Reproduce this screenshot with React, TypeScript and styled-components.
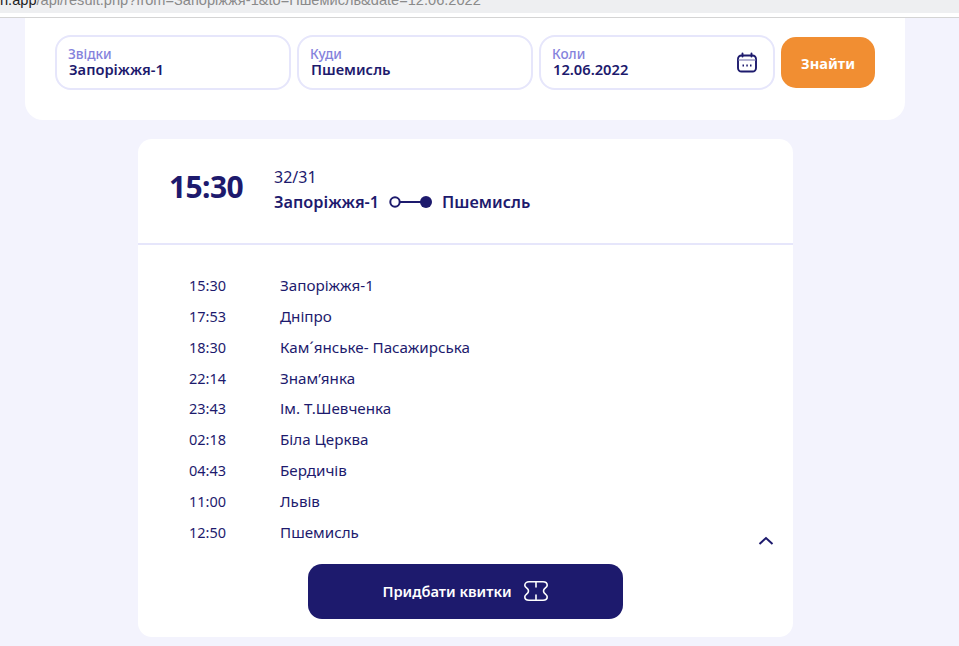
import React from 'react'
import styled, { createGlobalStyle } from 'styled-components'

const navy = '#1d1a6d'

const GlobalStyle = createGlobalStyle`
  html, body {
    margin: 0;
    height: 100%;
    overflow: hidden;
    background: #f3f3fd;
    font-family: "Noto Sans", "Open Sans", sans-serif;
  }
`

const Page = styled.div`
  width: 959px;
  height: 646px;
  overflow: hidden;
`

const AddressBar = styled.div`
  height: 13px;
  background: #eeeff1;
  color: #8a8a8a;
  font: 14.6px/14px "Liberation Sans", sans-serif;
  white-space: nowrap;
  overflow: hidden;
  span {
    display: block;
    margin-top: -7px;
  }
  b {
    font-weight: 400;
    color: #222;
  }
`

const BarGap = styled.div`
  height: 4px;
  background: #fff;
  border-bottom: 1px solid #d4d4d4;
`

const SearchCard = styled.form`
  width: 880px;
  height: 102px;
  margin-left: 25px;
  padding: 17px 30px 0;
  box-sizing: border-box;
  display: flex;
  gap: 6px;
  align-items: flex-start;
  background: #fff;
  border-radius: 0 0 18px 18px;
`

const Field = styled.div`
  width: 236px;
  height: 55px;
  box-sizing: border-box;
  border: 2px solid #e6e6fb;
  border-radius: 16px;
  padding: 11px 12px 0;
  position: relative;
`

const FieldLabel = styled.div`
  color: #8582dc;
  font-size: 13.5px;
  font-weight: 500;
  line-height: 13px;
  margin-left: -1px;
`

const FieldValue = styled.div`
  color: ${navy};
  font-size: 14.7px;
  font-weight: 600;
  line-height: 16px;
`

const CalendarIcon = styled.svg`
  position: absolute;
  right: 15px;
  top: 15px;
`

const FindButton = styled.button`
  width: 94px;
  height: 51px;
  margin-top: 2px;
  border: 0;
  border-radius: 15px;
  background: #f18e32;
  color: #fff;
  font: 700 14.6px "Noto Sans", sans-serif;
`

const RouteCard = styled.section`
  width: 655px;
  height: 498px;
  margin: 19px 0 0 138px;
  background: #fff;
  border-radius: 14px;
  display: flex;
  flex-direction: column;
`

const RouteHeader = styled.header`
  flex: none;
  height: 106px;
  box-sizing: border-box;
  padding: 26px 0 0 31px;
  display: flex;
  gap: 30px;
  border-bottom: 2px solid #e6e6fb;
`

const DepartTime = styled.div`
  width: 75px;
  color: ${navy};
  font-size: 30px;
  font-weight: 700;
  line-height: 44px;
  letter-spacing: -0.6px;
`

const TrainInfo = styled.div`
  display: flex;
  flex-direction: column;
`

const TrainNumber = styled.div`
  color: ${navy};
  font-size: 16px;
  line-height: 24px;
`

const Direction = styled.div`
  display: flex;
  align-items: center;
  gap: 10px;
  color: ${navy};
  font-size: 16.3px;
  font-weight: 600;
  line-height: 26px;
`

const StopList = styled.ul`
  list-style: none;
  margin: 0;
  padding: 25px 0 1px 51px;
  position: relative;
`

const Stop = styled.li`
  height: 30.85px;
  display: flex;
  color: ${navy};
  font-size: 15.2px;
  line-height: 30px;
`

const StopTime = styled.span`
  width: 91px;
  font-size: 14.5px;
`

const Chevron = styled.svg`
  position: absolute;
  left: 620px;
  bottom: 4px;
`

const BuyButton = styled.button`
  width: 315px;
  height: 55px;
  margin: 15px 0 0 170px;
  border: 0;
  border-radius: 14px;
  background: ${navy};
  color: #fff;
  font: 600 14.7px "Noto Sans", sans-serif;
  display: flex;
  align-items: center;
  justify-content: center;
  gap: 11px;
`

const stops = [
  ['15:30', 'Запоріжжя-1'],
  ['17:53', 'Дніпро'],
  ['18:30', 'Кам´янське- Пасажирська'],
  ['22:14', 'Знам’янка'],
  ['23:43', 'Ім. Т.Шевченка'],
  ['02:18', 'Біла Церква'],
  ['04:43', 'Бердичів'],
  ['11:00', 'Львів'],
  ['12:50', 'Пшемисль'],
]

const App: React.FC = () => (
  <Page>
    <GlobalStyle />
    <AddressBar>
      <span>
        <b>n.app</b>/api/result.php?from=Запоріжжя-1&amp;to=Пшемисль&amp;date=12.06.2022
      </span>
    </AddressBar>
    <BarGap />
    <SearchCard>
      <Field>
        <FieldLabel>Звідки</FieldLabel>
        <FieldValue>Запоріжжя-1</FieldValue>
      </Field>
      <Field>
        <FieldLabel>Куди</FieldLabel>
        <FieldValue>Пшемисль</FieldValue>
      </Field>
      <Field>
        <FieldLabel>Коли</FieldLabel>
        <FieldValue>12.06.2022</FieldValue>
        <CalendarIcon width="22" height="22" viewBox="0 0 22 22" fill="none" stroke={navy} strokeWidth="1.9">
          <rect x="2" y="3.5" width="18" height="16" rx="3.5" />
          <path d="M2.500 8h17" stroke="#9c9bc4" strokeWidth="1.500" />
          <path d="M6.500 1.500v3M15.500 1.500v3" strokeLinecap="round" />
          <path d="M6.500 13.500h1.500M10.300 13.500h1.500M14 13.500h1.500" strokeWidth="2" />
        </CalendarIcon>
      </Field>
      <FindButton type="button">Знайти</FindButton>
    </SearchCard>
    <RouteCard>
      <RouteHeader>
        <DepartTime>15:30</DepartTime>
        <TrainInfo>
          <TrainNumber>32/31</TrainNumber>
          <Direction>
            Запоріжжя-1
            <svg width="43" height="14" viewBox="0 0 43 14" fill="none" stroke={navy}>
              <circle cx="6" cy="7" r="4.700" strokeWidth="2" />
              <path d="M10 7h28" strokeWidth="2" />
              <circle cx="37" cy="7" r="6" fill={navy} stroke="none" />
            </svg>
            Пшемисль
          </Direction>
        </TrainInfo>
      </RouteHeader>
      <StopList>
        {stops.map(([time, name]) => (
          <Stop key={time}>
            <StopTime>{time}</StopTime>
            {name}
          </Stop>
        ))}
        <Chevron width="16" height="9" viewBox="0 0 16 9" fill="none" stroke={navy} strokeWidth="2">
          <path d="M1.500 8L8 2l6.500 6" />
        </Chevron>
      </StopList>
      <BuyButton type="button">
        Придбати квитки
        <svg width="26" height="22" viewBox="0 0 26 22" fill="none" stroke="#fff" strokeWidth="1.600" strokeLinecap="round">
          <path d="M6 1.800h14c2.400 0 4.200 1.500 4.200 3.500 0 2.700-3.700 2.700-3.700 5.700s3.700 3 3.700 5.700c0 2-1.800 3.500-4.200 3.500H6c-2.400 0-4.200-1.500-4.200-3.500 0-2.700 3.700-2.700 3.700-5.700S1.800 8 1.800 5.300c0-2 1.800-3.500 4.200-3.500z" />
          <path d="M13 2.500v4.500M13 15v4.500" />
        </svg>
      </BuyButton>
    </RouteCard>
  </Page>
)

export default App
